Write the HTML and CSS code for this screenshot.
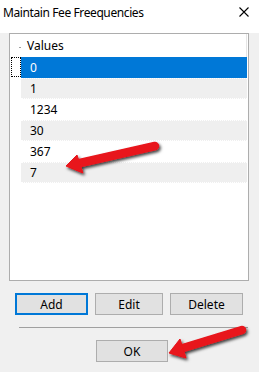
FILE: index.html
```html
<!DOCTYPE html>
<html>
<head>
<title>Maintain Fee Freequencies</title>
<link rel="stylesheet" href="styles.css">
</head>
<body>

<div class="dialog">
    <div class="titlebar">
        <span class="title">Maintain Fee Freequencies</span>
        <svg class="close-icon" width="10" height="10" viewBox="0 0 10 10">
            <path d="M0.5 0.5 L9.5 9.5 M9.5 0.5 L0.5 9.5" stroke="#000" stroke-width="1.1" fill="none"/>
        </svg>
    </div>

    <div class="client">
        <div class="list-view">
            <div class="list-header">
                <div class="row-head-col"><span class="grip"></span></div>
                <div class="col-values">Values</div>
            </div>
            <div class="list-row selected">
                <div class="row-head-col"><span class="focus-box"></span></div>
                <div class="cell">0</div>
            </div>
            <div class="list-row alt">
                <div class="row-head-col"></div>
                <div class="cell">1</div>
            </div>
            <div class="list-row">
                <div class="row-head-col"></div>
                <div class="cell">1234</div>
            </div>
            <div class="list-row alt">
                <div class="row-head-col"></div>
                <div class="cell">30</div>
            </div>
            <div class="list-row">
                <div class="row-head-col"></div>
                <div class="cell">367</div>
            </div>
            <div class="list-row alt">
                <div class="row-head-col"></div>
                <div class="cell">7</div>
            </div>
        </div>

        <div class="button-row">
            <button class="win-btn default-btn">Add</button>
            <button class="win-btn edit-btn">Edit</button>
            <button class="win-btn">Delete</button>
        </div>

        <div class="separator"></div>

        <div class="ok-row">
            <button class="win-btn">OK</button>
        </div>
    </div>

    <!-- red callout arrows drawn over the dialog -->
    <svg class="arrows" width="259" height="372" viewBox="0 0 259 372">
        <defs>
            <filter id="shadow" x="-20%" y="-50%" width="140%" height="200%">
                <feDropShadow dx="1.5" dy="2" stdDeviation="1.5" flood-color="#000" flood-opacity="0.75"/>
            </filter>
        </defs>
        <g filter="url(#shadow)" fill="#e8131a" stroke="#e8131a">
            <line x1="155" y1="146" x2="80" y2="163" stroke-width="8.5" stroke-linecap="round"/>
            <polygon points="66,166 77,155 83,173" stroke-width="1" stroke-linejoin="round"/>
            <line x1="242" y1="330" x2="183" y2="348" stroke-width="8.5" stroke-linecap="round"/>
            <polygon points="169,353 180,339 186,358" stroke-width="1" stroke-linejoin="round"/>
        </g>
    </svg>
</div>

</body>
</html>
```

FILE: styles.css
```css
body {
    margin: 0;
    padding: 0;
    font-family: "Noto Sans", "Open Sans", sans-serif;
    font-size: 12px;
    color: #000;
    background-color: #f0f0f0;
}
.dialog {
    position: relative;
    width: 259px;
    height: 372px;
    overflow: hidden;
    background-color: #f0f0f0;
}
.titlebar {
    height: 33px;
    background-color: #fff;
    display: flex;
    align-items: center;
    justify-content: space-between;
    padding: 0 10px 0 3px;
}
.title {
    font-size: 12px;
    letter-spacing: -0.4px;
    margin-top: -9px;
}
.close-icon {
    margin-top: -9px;
}
.client {
    padding: 0 10px 0 9px;
}
.list-view {
    width: 238px;
    height: 246px;
    border: 1px solid #adadad;
    background-color: #fff;
}
.list-header {
    display: flex;
    height: 23px;
}
.row-head-col {
    width: 11px;
    position: relative;
    flex: none;
}
.grip {
    position: absolute;
    right: 0;
    top: 13px;
    width: 2px;
    height: 1px;
    background-color: #a0a0a0;
}
.col-values {
    flex: 1;
    padding-left: 6px;
    line-height: 23px;
    margin-right: 1px;
    border-right: 1px solid #e5e5e5;
}
.list-row {
    display: flex;
    height: 21px;
}
.list-row .cell {
    flex: 1;
    margin-right: 1px;
    padding-left: 9px;
    line-height: 21px;
}
.list-row.alt .cell {
    background-color: #efefef;
    border-top: 1px dotted #fff;
    border-bottom: 1px dotted #fff;
    line-height: 19px;
}
.list-row.selected .cell {
    background-color: #0078d7;
    color: #fff;
}
.focus-box {
    position: absolute;
    left: 1px;
    right: 0;
    top: 0;
    bottom: 1px;
    border: 1px dotted #000;
}
.button-row {
    display: flex;
    gap: 7px;
    margin-top: 12px;
    padding-left: 6px;
}
.win-btn {
    width: 73px;
    height: 22px;
    padding: 0;
    border: 1px solid #adadad;
    background-color: #e1e1e1;
    font-family: "Noto Sans", "Open Sans", sans-serif;
    font-size: 12px;
    color: #000;
}
.default-btn {
    border: 2px solid #0078d7;
}
.edit-btn {
    width: 68px;
}
.separator {
    margin: 12px 0 0 10px;
    width: 229px;
    height: 1px;
    background-color: #a0a0a0;
}
.ok-row {
    margin-top: 12px;
    padding-left: 87px;
}
.ok-row .win-btn {
    width: 72px;
}
.arrows {
    position: absolute;
    left: 0;
    top: 0;
}
```
